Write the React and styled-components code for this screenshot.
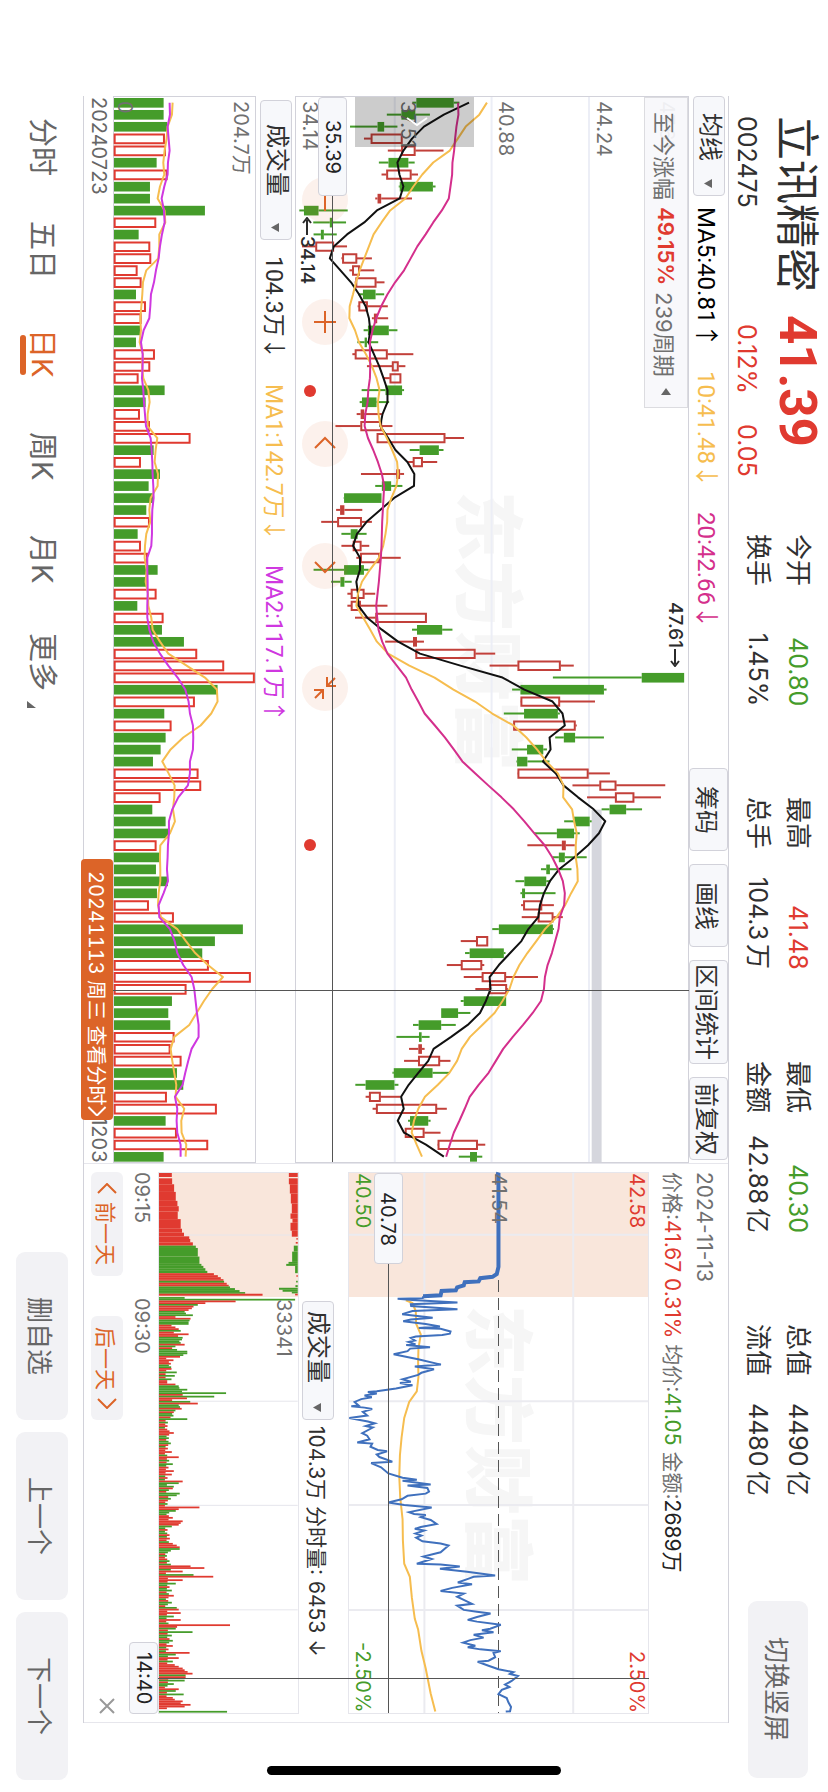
import React from "react";
import styled, { createGlobalStyle, css } from "styled-components";

const RED = "#e03a30";
const GREEN = "#459c2a";
const ORANGE = "#dc6428";
const AMBER = "#f6bd4f";
const MAGENTA = "#d42f8c";
const PURPLE = "#cf38e0";
const BLUE = "#3f70bd";
const INK = "#303030";
const GREY = "#666";
const LINE = "#d2d2da";
const SOFT = "#e6e6ec";
const CHIP = "#f7f8fb";

const TEXT_FONT = 'Inter, "Noto Sans CJK SC", sans-serif';
const LEGEND_FONT = 'Roboto, "Noto Sans CJK SC", sans-serif';

/* ---------- data ---------- */

// [direction, low, body start, body end, high]
const candles = [
  ["g", 395, 407, 520, 537], ["g", 318, 362, 404, 448], ["g", 207, 290, 310, 350],
  ["r", 249, 270, 365, 365], ["r", 321, 362, 404, 489], ["g", 294, 323, 383, 402],
  ["r", 302, 317, 392, 412], ["g", 354, 357, 457, 465], ["r", 283, 290, 301, 394],
  ["g", 54, 68, 112, 200], ["g", 96, 146, 154, 195], ["g", 97, 119, 128, 167],
  ["r", 62, 103, 158, 198], ["r", 181, 184, 228, 273], ["r", 205, 214, 236, 280],
  ["r", 221, 224, 286, 311], ["g", 231, 246, 284, 310], ["r", 230, 233, 260, 321],
  ["r", 273, 279, 289, 322], ["g", 248, 261, 324, 350], ["g", 229, 251, 258, 292],
  ["r", 214, 222, 320, 398], ["r", 258, 334, 353, 374], ["r", 308, 327, 361, 361],
  ["g", 242, 314, 364, 370], ["g", 236, 243, 287, 325], ["r", 227, 239, 250, 303],
  ["r", 163, 239, 303, 335], ["r", 288, 288, 494, 551], ["g", 387, 417, 475, 489],
  ["r", 382, 397, 426, 470], ["r", 240, 346, 358, 370], ["g", 283, 303, 331, 365],
  ["g", 188, 189, 302, 302], ["r", 165, 177, 190, 244], ["r", 120, 169, 242, 273],
  ["g", 181, 209, 230, 257], ["r", 181, 216, 241, 265], ["r", 226, 238, 297, 360],
  ["g", 97, 189, 249, 263], ["g", 150, 178, 190, 212], ["r", 199, 210, 250, 283],
  ["r", 199, 210, 239, 320], ["r", 222, 284, 438, 438], ["g", 394, 409, 485, 516],
  ["r", 313, 397, 409, 430], ["r", 403, 405, 585, 645], ["r", 628, 713, 842, 882],
  ["g", 819, 1087, 1215, 1215], ["g", 696, 721, 973, 981], ["r", 721, 722, 840, 946],
  ["g", 671, 732, 834, 840], ["r", 698, 700, 887, 891], ["g", 826, 852, 886, 973],
  ["g", 695, 741, 790, 801], ["g", 709, 711, 742, 809], ["r", 712, 713, 926, 991],
  ["r", 878, 960, 1010, 1158], ["r", 922, 1007, 1064, 1145], ["g", 966, 990, 1040, 1088],
  ["g", 853, 883, 930, 936], ["g", 762, 831, 883, 900], ["r", 742, 846, 858, 885],
  ["g", 818, 837, 855, 921], ["g", 783, 799, 810, 875], ["g", 706, 733, 799, 812],
  ["g", 721, 726, 735, 827], ["r", 723, 730, 786, 822], ["r", 725, 774, 820, 849],
  ["g", 636, 656, 819, 822], ["r", 541, 588, 623, 623], ["g", 554, 568, 671, 676],
  ["r", 499, 542, 605, 612], ["r", 550, 605, 677, 774], ["r", 585, 627, 680, 683],
  ["g", 541, 550, 678, 678], ["g", 482, 482, 533, 570], ["g", 397, 414, 482, 526],
  ["g", 347, 415, 423, 447], ["r", 385, 413, 424, 432], ["r", 370, 413, 478, 510],
  ["g", 335, 339, 456, 508], ["g", 223, 254, 341, 353], ["r", 254, 265, 299, 359],
  ["r", 275, 286, 469, 499], ["g", 382, 388, 443, 450], ["r", 371, 373, 431, 480],
  ["r", 471, 472, 592, 615], ["g", 535, 569, 590, 606],
];

const ma5 = [566, 490, 430, 394, 368, 350, 356, 368, 357, 288, 250, 198, 158, 146, 178, 210, 234, 254, 264, 268, 263, 279, 295, 308, 320, 320, 305, 298, 322, 344, 380, 401, 400, 340, 298, 257, 228, 216, 237, 237, 226, 231, 232, 259, 303, 352, 418, 540, 667, 733, 818, 848, 855, 809, 812, 789, 828, 851, 895, 942, 977, 958, 925, 884, 838, 810, 792, 780, 775, 745, 724, 690, 656, 628, 631, 617, 599, 562, 512, 459, 443, 413, 384, 361, 369, 351, 370, 436, 490];
const ma10 = [620, 597, 556, 532, 508, 458, 425, 398, 374, 328, 302, 278, 264, 250, 236, 225, 216, 206, 205, 222, 234, 255, 273, 287, 296, 291, 293, 299, 318, 334, 349, 352, 347, 332, 320, 319, 314, 307, 294, 267, 243, 231, 226, 247, 268, 288, 322, 386, 462, 519, 584, 636, 700, 739, 771, 799, 834, 851, 850, 877, 883, 891, 888, 888, 893, 894, 874, 856, 830, 795, 769, 742, 718, 700, 688, 667, 643, 606, 569, 544, 530, 507, 472, 433, 413, 400, 393, 408, 424];
const ma20 = [533, 534, 528, 524, 521, 516, 515, 510, 505, 484, 458, 435, 410, 390, 370, 343, 320, 301, 286, 275, 267, 267, 268, 267, 262, 260, 253, 251, 261, 277, 291, 303, 310, 308, 306, 304, 303, 302, 300, 297, 294, 290, 286, 289, 293, 304, 320, 348, 376, 393, 413, 432, 463, 493, 520, 546, 585, 624, 664, 701, 733, 763, 794, 817, 835, 849, 855, 853, 840, 836, 826, 816, 803, 795, 792, 783, 758, 729, 698, 669, 647, 625, 595, 568, 553, 537, 520, 508, 497];

// volume per day: a negative value is a falling day
const volumes = [-251, -251, -262, 254, 257, -230, 262, -210, -210, -375, 228, -176, 210, 213, 172, 184, -168, 197, 184, -180, -168, 224, 210, 175, -254, -197, 179, 209, 331, -221, 182, -240, -206, -219, -199, 209, -173, 182, 203, -233, -200, 229, -172, 250, -246, -312, 351, 432, 524, -413, 344, -253, 274, -257, -242, -219, 355, 363, 241, -217, -257, -265, 229, -241, -228, -264, -231, 206, 281, -489, -405, -367, 386, 512, 319, -276, -265, -271, 283, 271, 304, -291, -310, 260, 410, -257, 290, 384, -251];
const volMa1 = [278, 276, 263, 260, 254, 250, 253, 240, 233, 254, 256, 238, 238, 235, 199, 189, 187, 184, 181, 183, 179, 189, 186, 190, 205, 209, 203, 203, 232, 227, 224, 234, 233, 212, 208, 211, 199, 195, 194, 200, 197, 204, 205, 214, 218, 240, 265, 320, 375, 411, 413, 394, 362, 310, 272, 247, 266, 284, 283, 279, 285, 270, 241, 240, 241, 241, 236, 234, 243, 292, 318, 346, 384, 429, 397, 372, 350, 328, 283, 272, 277, 283, 289, 287, 313, 304, 305, 319, 317];
const volMa2 = [269, 270, 263, 266, 269, 264, 263, 253, 245, 252, 254, 246, 240, 236, 228, 222, 213, 211, 208, 191, 183, 188, 188, 186, 190, 192, 195, 198, 212, 215, 217, 218, 220, 221, 217, 216, 216, 214, 202, 202, 203, 203, 202, 202, 208, 220, 240, 265, 293, 316, 326, 330, 339, 340, 339, 330, 330, 324, 295, 277, 267, 267, 264, 263, 261, 264, 251, 236, 238, 270, 284, 292, 310, 335, 343, 347, 351, 356, 356, 335, 325, 316, 308, 285, 292, 290, 292, 302, 302];

const auctionLine = "497,38 505,40 505,300 500,320 487,328 450,332 445,341 403,343 400,352 380,358 376,366 333,368 330,380 277,383";
const priceLine = "277,383 276,388 200,390 245,393 381,400 240,405 241,410 381,419 245,424 214,433 306,443 240,448 217,453 285,461 328,468 264,472 330,474 360,482 358,488 335,492 255,496 240,500 252,507 233,511 254,518 226,520 298,526 238,530 230,537 188,546 262,560 331,575 252,580 310,588 272,598 262,604 215,616 240,623 207,627 245,633 195,642 137,650 110,652 137,656 100,662 122,667 90,672 70,680 82,690 60,692 100,696 123,700 95,708 108,718 54,725 110,735 131,740 104,748 125,752 93,768 108,775 115,785 78,794 123,797 118,806 140,815 168,819 137,828 145,835 184,848 120,852 150,864 172,881 215,893 258,899 215,902 300,912 230,915 290,922 295,932 285,938 230,944 212,954 172,963 220,970 303,977 235,990 250,995 285,998 270,1004 300,1012 318,1023 270,1032 252,1037 280,1042 254,1050 272,1056 256,1062 275,1072 330,1078 354,1084 330,1103 278,1115 303,1122 258,1135 330,1137 388,1143 328,1149 410,1158 495,1168 430,1172 415,1177 382,1188 425,1193 365,1203 330,1212 400,1219 380,1228 400,1237 425,1248 380,1253 400,1265 440,1270 481,1275 440,1285 412,1293 440,1298 512,1307 480,1318 455,1322 490,1328 430,1335 460,1343 420,1350 398,1357 435,1366 412,1370 450,1376 512,1381 490,1386 495,1398 475,1408 442,1411 475,1422 505,1432 550,1440 540,1445 564,1451 545,1465 525,1475 538,1482 515,1490 505,1502 530,1513 535,1525 543,1538 540,1550 527,1551";
const averageLine = "225,394 245,402 255,425 256,460 270,490 263,530 262,570 263,610 258,650 235,680 220,725 212,780 207,830 205,890 208,950 215,1010 216,1070 220,1135 237,1172 243,1230 252,1290 262,1320 272,1380 285,1430 300,1500 314,1551";

// call auction: [from, to, size, direction]
const auctionMatched = [
  [38, 50, 39, "r"], [54, 72, 40, "r"], [72, 95, 46, "r"], [95, 122, 51, "r"], [122, 138, 56, "r"],
  [138, 154, 60, "r"], [154, 177, 57, "r"], [177, 206, 66, "r"], [206, 218, 70, "r"], [218, 229, 76, "r"],
  [229, 237, 92, "r"], [237, 247, 95, "r"], [247, 257, 103, "r"], [257, 264, 112, "g"], [264, 290, 118, "g"],
  [290, 312, 123, "g"], [312, 318, 129, "g"], [318, 325, 135, "g"], [325, 333, 141, "g"], [333, 340, 147, "g"],
  [340, 346, 167, "r"], [346, 352, 179, "r"], [352, 358, 188, "r"], [358, 363, 196, "r"], [363, 369, 198, "g"],
  [369, 375, 206, "r"], [375, 380, 212, "r"], [380, 385, 216, "g"], [385, 391, 231, "g"], [391, 397, 245, "g"],
  [397, 402, 262, "g"], [402, 408, 315, "r"],
];
const auctionUnmatched = [
  [38, 50, 27, "r"], [54, 72, 27, "r"], [72, 100, 24, "r"], [100, 130, 21, "r"], [130, 160, 18, "r"],
  [160, 176, 22, "r"], [176, 188, 16, "r"], [188, 212, 22, "r"], [212, 230, 18, "r"], [234, 239, 4, "r"],
  [246, 251, 6, "r"], [257, 275, 12, "g"], [275, 306, 17, "g"], [306, 312, 28, "g"], [312, 318, 35, "g"],
  [318, 340, 8, "g"], [346, 351, 4, "r"], [363, 368, 5, "g"], [376, 382, 7, "g"], [384, 390, 57, "g"],
  [390, 396, 46, "g"], [396, 401, 18, "g"], [402, 407, 8, "r"],
];

const openingVolumes = [-78, -414, 233, 141, -118, 105, 100, 90, -78, -82, -103, 50, 96, -93, -90, -90, 38, 50, 60, -66, 45, 90, 58, -72, -70, -62, -66, 78, -50, 40, -55, -86, -86, -74, 64, 22, 44, 30, 36, -30, -37, 38, 22, -54, 20, -48, 20, -38, 25, 25, 50, -60, -62, -86, -70, -204, 72, -168, 85, 40, -95, 118, -60, -64, 69, -50, 45, -40, -44, 35, -86];
const busyMinutes = { 78: 45, 84: -36, 89: 39, 92: 60, 96: -42, 100: 45, 102: 39, 106: 72, 107: -60, 109: -45, 110: 42, 113: -63, 114: -54, 116: -36, 121: 123, 122: 60, 123: -51, 127: 42, 129: 72, 130: 66, 131: 60, 132: -39, 139: 33, 142: 42, 143: 54, 144: 63, 145: -63, 146: -36, 149: -24, 154: -36, 155: 96, 156: 138, 157: -36, 158: 72, 160: -105, 161: 165, 163: 72, 165: -51, 169: -39, 172: 45, 176: -39, 179: -54, 180: 60, 182: 66, 184: -45, 186: 66, 189: 216, 190: 55, 191: -51, 193: -102, 195: -39, 198: -42, 201: 42, 205: 93, 206: -51, 208: 60, 210: -42, 212: 48, 213: 60, 214: 72, 215: 78, 216: 87, 217: 102, 218: -81, 219: 81, 221: -78, 223: -45, 226: 60, 227: -51, 229: -75, 231: 42, 232: 48, 233: 72, 234: 66, 235: 96, 236: 78, 237: 24, 238: 0, 239: -207 };
const minuteVolumes = Array.from({ length: 240 }, (_, m) => {
  if (m < openingVolumes.length) return openingVolumes[m];
  if (m in busyMinutes) return busyMinutes[m];
  const size = 18 + ((m * 37) % 15);
  return (m * 7) % 11 < 6 ? size : -size;
});

const quotes = [
  { label: "今开", value: "40.80", tone: GREEN },
  { label: "最高", value: "41.48", tone: RED },
  { label: "最低", value: "40.30", tone: GREEN },
  { label: "总值", value: "4490", unit: "亿" },
  { label: "换手", value: "1.45%" },
  { label: "总手", value: "104.3", unit: "万" },
  { label: "金额", value: "42.88", unit: "亿" },
  { label: "流值", value: "4480", unit: "亿" },
];

/* ---------- shared pieces ---------- */

const GlobalStyle = createGlobalStyle`
  * { box-sizing: border-box; }
  body { margin: 0; background: #fff; }
  button, select {
    font: inherit;
    color: inherit;
    margin: 0;
    padding: 0;
    border: 0;
    background: none;
    writing-mode: inherit;
    text-orientation: inherit;
    white-space: nowrap;
  }
`;

const row = css`
  display: flex;
  flex-direction: row;
  align-items: center;
`;

const Page = styled.main`
  position: relative;
  display: flex;
  flex-direction: column;
  inline-size: 100vh;
  min-block-size: 100vw;
  writing-mode: vertical-rl;
  text-orientation: sideways;
  font-family: ${TEXT_FONT};
  font-size: 20px;
  color: ${INK};
  white-space: nowrap;
  overflow: hidden;
`;

const Header = styled.header`
  display: flex;
  flex: none;
  align-items: flex-start;
  block-size: 99px;
  padding-inline: 116px 14px;
`;

const Identity = styled.div`
  flex: none;
  inline-size: 418px;
  padding-block-start: 8px;
`;

const TitleLine = styled.div`
  ${row}
  gap: 23px;
  margin-block-end: 11px;
  line-height: 46px;
`;

const Name = styled.h1`
  margin: 0;
  font-size: 44px;
  font-weight: 400;
`;

const Price = styled.strong`
  font-family: ${LEGEND_FONT};
  font-size: 51px;
  font-weight: 700;
  color: ${RED};
`;

const CodeLine = styled.div`
  display: grid;
  grid-template-columns: 208px 100px auto;
  font-size: 25px;
  line-height: 32px;
`;

const Figure = styled.span`
  color: ${(p) => p.$tone || "inherit"};
  font-weight: ${(p) => (p.$strong ? 600 : 400)};
`;

const Unit = styled.span`
  margin-inline-start: 4px;
`;

const Quotes = styled.dl`
  display: grid;
  flex: 1;
  grid-template-columns: repeat(4, 1fr);
  column-gap: 91px;
  margin: 0;
  padding-block-start: 10px;
  font-size: 25px;
  line-height: 40px;
`;

const Quote = styled.div`
  display: flex;
  justify-content: space-between;
  dt { font-size: 26px; }
  dd { margin: 0; color: ${(p) => p.$tone || INK}; }
`;

const SoftButton = styled.button`
  flex: none;
  inline-size: ${(p) => p.$length}px;
  block-size: ${(p) => p.$thick}px;
  border-radius: 9px;
  && { background: #f2f2f5; color: ${GREY}; font-size: 26px; }
`;

const RotateButton = styled(SoftButton)`
  && { margin-block-start: 20px; margin-inline-start: 105px; }
`;

const Body = styled.div`
  display: grid;
  flex: 1;
  grid-template-columns: minmax(0, 1067fr) minmax(0, 560fr);
  min-block-size: 0;
  margin-inline: 96px 69px;
  border-block: 1px solid ${LINE};
`;

const Panel = styled.section`
  position: relative;
  display: flex;
  flex-direction: column;
`;

const SidePanel = styled(Panel)`
  padding-inline: 8px;
  border-inline: 1px solid ${SOFT};
`;

const Plot = styled.div`
  position: relative;
  flex: ${(p) => p.$share} 1 0;
  min-block-size: 0;
  border: 1px solid ${(p) => p.$edge || LINE};
`;

const Drawing = styled.svg`
  position: absolute;
  inset: 0;
  width: 100%;
  height: 100%;
  overflow: visible;
  polyline, line, rect { vector-effect: non-scaling-stroke; }
`;

const Watermark = styled.span`
  position: absolute;
  inset-block-start: ${(p) => p.$down};
  inset-inline-start: ${(p) => p.$along};
  font-size: 70px;
  font-weight: 900;
  line-height: 80px;
  color: #f6f6f6;
`;

const AxisLabel = styled.span`
  position: absolute;
  inset-block-end: ${(p) => p.$up};
  ${(p) => (p.$end ? "inset-inline-end: 0;" : `inset-inline-start: ${p.$along || "4px"};`)}
  line-height: 27px;
  color: ${(p) => p.$tone || "#707070"};
`;

const Marker = styled.span`
  position: absolute;
  ${row}
  gap: 1px;
  inset-block-end: ${(p) => p.$up};
  inset-inline-start: ${(p) => p.$along};
  line-height: 22px;
  font-size: 19px;
  font-weight: 500;
  color: #2b2b2b;
`;

const HLine = styled.i`
  position: absolute;
  inset-inline: 0;
  inset-block-end: ${(p) => p.$up};
  block-size: 1px;
  background: #555;
`;

const VLine = styled.i`
  position: absolute;
  inset-inline-start: ${(p) => p.$along};
  inset-block: ${(p) => p.$from} ${(p) => p.$to};
  inline-size: 1px;
  background: #555;
`;

const ValueTag = styled.output`
  position: absolute;
  ${row}
  justify-content: center;
  inset-block-end: ${(p) => p.$up};
  ${(p) => (p.$end ? "inset-inline-end: 0;" : "inset-inline-start: 0;")}
  inline-size: ${(p) => p.$length}px;
  block-size: 29px;
  border: 1px solid ${LINE};
  border-radius: 4px;
  background: ${CHIP};
  color: #222;
`;

const Picker = styled.label`
  position: relative;
  ${row}
  flex: none;
  inline-size: ${(p) => p.$length}px;
  block-size: 32px;
  border: 1px solid ${LINE};
  border-radius: 4px;
  background: ${CHIP};
  font-size: 24px;
  select {
    appearance: none;
    inline-size: 100%;
    block-size: 100%;
    padding-inline-start: ${(p) => p.$pad}px;
  }
  svg {
    position: absolute;
    inset-inline-end: 7px;
    inset-block-start: 12px;
    pointer-events: none;
  }
`;

const Legend = styled.div`
  ${row}
  flex: none;
  block-size: 39px;
  padding-inline-start: ${(p) => p.$pad || 0}px;
  font-family: ${LEGEND_FONT};
  font-size: ${(p) => p.$size}px;
`;

const Averages = styled.div`
  ${row}
  gap: 24px;
  margin-inline-start: ${(p) => p.$space}px;
`;

const Actions = styled.div`
  ${row}
  gap: 13px;
  margin-inline-start: auto;
  margin-inline-end: 3px;
`;

const ActionButton = styled.button`
  && {
    min-inline-size: 83px;
    padding-inline: 3px;
    block-size: 39px;
    border: 1px solid ${LINE};
    border-radius: 4px;
    background: ${CHIP};
    font-size: 24px;
  }
`;

const GainButton = styled.button`
  && {
    position: absolute;
    ${row}
    gap: 7px;
    inset-block-start: 0;
    inset-inline-start: 0;
    inline-size: 311px;
    block-size: 44px;
    padding-inline: 14px 12px;
    border: 1px solid #dcdce0;
    background: rgba(247, 248, 251, 0.93);
    color: #707070;
    font-size: 22px;
  }
  svg { margin-inline-start: auto; }
`;

const Fold = styled.button`
  && {
    position: absolute;
    inset-inline-start: 0;
    inset-block: 54.5% 15%;
    inline-size: 50px;
    background: rgba(0, 0, 0, 0.2);
  }
`;

const Tools = styled.div`
  position: absolute;
  display: flex;
  gap: 76px;
  inset-block-end: 6px;
  inset-inline-start: 80px;
`;

const ToolButton = styled.button`
  inline-size: 46px;
  block-size: 46px;
  border-radius: 50%;
  && { background: rgba(220, 100, 40, 0.09); }
  svg { display: block; }
`;

const Dot = styled.i`
  position: absolute;
  inset-block-end: 8px;
  inset-inline-start: ${(p) => p.$along};
  inline-size: 12px;
  block-size: 12px;
  border-radius: 50%;
  background: ${RED};
`;

const Dates = styled.div`
  position: relative;
  ${row}
  justify-content: space-between;
  flex: none;
  block-size: 29px;
  padding-inline-start: 1px;
  color: ${GREY};
`;

const DayButton = styled.button`
  && {
    position: absolute;
    ${row}
    justify-content: space-between;
    inset-block-start: 0;
    inset-inline-end: 43px;
    inline-size: 261px;
    block-size: 32px;
    padding-inline: 12px 4px;
    border-radius: 4px;
    background: ${ORANGE};
    color: #fff;
    font-variant-numeric: tabular-nums;
  }
`;

const Summary = styled.div`
  flex: none;
  block-size: 79px;
  padding-block-start: 8px;
  font-size: 21px;
  color: #707070;
`;

const SummaryLine = styled.p`
  margin: 0;
  line-height: 32px;
`;

const SideLegend = styled.div`
  ${row}
  gap: 6px;
  flex: none;
  block-size: 49px;
  padding-inline-start: 129px;
  padding-block-start: 11px;
  font-size: 21px;
`;

const Times = styled.div`
  position: relative;
  flex: none;
  block-size: 32px;
  color: ${GREY};
`;

const DayNav = styled.nav`
  ${row}
  align-items: flex-start;
  gap: 40px;
  flex: none;
  block-size: 42px;
`;

const DayLink = styled.button`
  && {
    ${row}
    gap: 8px;
    justify-content: center;
    inline-size: 104px;
    block-size: 32px;
    margin-block-start: 3px;
    border-radius: 6px;
    background: #f2f2f5;
    color: ${ORANGE};
    font-size: 21px;
  }
`;

const CloseButton = styled.button`
  && { margin-inline-start: auto; margin-block-start: 11px; }
  svg { display: block; }
`;

const Footer = styled.footer`
  ${row}
  flex: none;
  gap: 12px;
  block-size: 83px;
  padding-inline: 96px 12px;
`;

const Tabs = styled.nav`
  display: flex;
  flex: none;
  inline-size: 618px;
  margin-inline-end: auto;
`;

const Tab = styled.button`
  position: relative;
  flex: 1;
  && { color: ${(p) => (p.$on ? ORANGE : GREY)}; font-size: 29px; line-height: 44px; }
  ${(p) =>
    p.$on &&
    css`
      &::after {
        content: "";
        position: absolute;
        inset-block-end: 0;
        inset-inline-start: 33px;
        inline-size: 40px;
        block-size: 6px;
        border-radius: 3px;
        background: ${ORANGE};
      }
    `}
  svg { position: absolute; inset-block-end: 7px; inset-inline-end: 6px; }
`;

const HomeBar = styled.i`
  position: absolute;
  inset-inline-end: 17px;
  inset-block: 267px;
  inline-size: 9px;
  border-radius: 5px;
  background: #000;
`;

const Auction = styled.div`
  position: absolute;
  inset-block: 0;
  inset-inline-start: 0;
  inline-size: 23%;
  background: #f9e6db;
`;

function Dropdown({ name, value, length, pad }) {
  return (
    <Picker $length={length} $pad={pad}>
      <select aria-label={name} defaultValue={value}>
        <option>{value}</option>
      </select>
      <svg width="8" height="9" viewBox="0 0 8 9"><path d="M8 0V9L0 4.500Z" fill={GREY} /></svg>
    </Picker>
  );
}

function Stroke({ size, d, color = ORANGE, width = 2 }) {
  return (
    <svg width={size} height={size} viewBox={`0 0 ${size} ${size}`} fill="none" stroke={color} strokeWidth={width}>
      <path d={d} />
    </svg>
  );
}

const Chevron = ({ back, color = ORANGE }) => (
  <svg width="20" height="11" viewBox="0 0 20 11" fill="none" stroke={color} strokeWidth="2">
    <path d={back ? "M1 10L10 1L19 10" : "M1 1L10 10L19 1"} />
  </svg>
);

const dayAt = (i) => 17 + 36 * i;
const trace = (values) => values.map((v, i) => `${v},${dayAt(i)}`).join(" ");

function Trend({ values, color }) {
  return <polyline points={trace(values)} fill="none" stroke={color} strokeWidth="2" strokeLinejoin="round" />;
}

function Candles() {
  return (
    <Drawing viewBox="44 0 1182 3201" preserveAspectRatio="none">
      {[342, 634, 928].map((x) => (
        <line key={x} x1={x} x2={x} y1="0" y2="3201" stroke="#eceef6" strokeWidth="2" />
      ))}
      <rect x="936" y="2142" width="30" height="1059" fill="#d5d6dd" />
      {candles.map(([dir, low, from, to, high], i) => {
        const y = dayAt(i);
        const color = dir === "g" ? GREEN : "#c2403a";
        return (
          <g key={i} stroke={color}>
            <line x1={low} x2={from} y1={y} y2={y} strokeWidth="2" />
            <line x1={to} x2={high} y1={y} y2={y} strokeWidth="2" />
            {dir === "g" || to - from < 14 ? (
              <rect x={from} y={y - 14} width={to - from} height="29" fill={color} stroke="none" />
            ) : (
              <rect x={from + 2} y={y - 12} width={to - from - 4} height="25" fill="none" strokeWidth="2" />
            )}
          </g>
        );
      })}
      <Trend values={ma5} color="#111" />
      <Trend values={ma10} color={AMBER} />
      <Trend values={ma20} color={MAGENTA} />
    </Drawing>
  );
}

function VolumeBars() {
  return (
    <Drawing viewBox="102 0 424 3201" preserveAspectRatio="none">
      {volumes.map((v, i) => {
        const y = dayAt(i);
        return v < 0 ? (
          <rect key={i} x="102" y={y - 14} width={-v - 102} height="29" fill={GREEN} />
        ) : (
          <rect key={i} x="104" y={y - 12} width={v - 106} height="26" fill="none" stroke={RED} strokeWidth="2" />
        );
      })}
      <Trend values={volMa1} color={AMBER} />
      <Trend values={volMa2} color={PURPLE} />
    </Drawing>
  );
}

function IntradayPrice() {
  return (
    <Drawing viewBox="53 36 905 1519" preserveAspectRatio="none">
      {[281, 731].map((x) => (
        <line key={x} x1={x} x2={x} y1="36" y2="1555" stroke="#ebebf0" strokeWidth="2" />
      ))}
      {[210, 678, 970, 1265].map((y) => (
        <line key={y} x1="53" x2="958" y1={y} y2={y} stroke="#ebebf0" strokeWidth="2" />
      ))}
      <line x1="505" x2="505" y1="337" y2="1555" stroke="#555" strokeWidth="1" strokeDasharray="12 6" shapeRendering="crispEdges" />
      <polyline points={averageLine} fill="none" stroke={AMBER} strokeWidth="2" />
      <polyline points={auctionLine} fill="none" stroke={BLUE} strokeWidth="4" />
      <polyline points={priceLine} fill="none" stroke={BLUE} strokeWidth="2" />
    </Drawing>
  );
}

function IntradayVolume() {
  return (
    <Drawing viewBox="204 38 422 1628" preserveAspectRatio="none">
      {[225, 726, 1040, 1355].map((y) => (
        <line key={y} x1="204" x2="626" y1={y} y2={y} stroke="#e6e6ec" strokeWidth="1" />
      ))}
      {auctionMatched.map(([from, to, size, dir]) => (
        <rect key={from} x="204" y={from} width={size} height={to - from} fill={dir === "r" ? RED : GREEN} />
      ))}
      {auctionUnmatched.map(([from, to, size, dir]) => (
        <rect key={from} x={626 - size} y={from} width={size} height={to - from} fill={dir === "r" ? RED : GREEN} />
      ))}
      {minuteVolumes.map((v, m) => (
        <rect key={m} x="204" y={412 + m * 5.22} width={Math.abs(v)} height="5.3" fill={v > 0 ? RED : GREEN} />
      ))}
    </Drawing>
  );
}

export default function App() {
  return (
    <>
      <GlobalStyle />
      <Page>
        <Header>
          <Identity>
            <TitleLine>
              <Name>立讯精密</Name>
              <Price>41.39</Price>
            </TitleLine>
            <CodeLine>
              <Figure>002475</Figure>
              <Figure $tone={RED}>0.12%</Figure>
              <Figure $tone={RED}>0.05</Figure>
            </CodeLine>
          </Identity>
          <Quotes>
            {quotes.map((q) => (
              <Quote key={q.label} $tone={q.tone}>
                <dt>{q.label}</dt>
                <dd>
                  {q.value}
                  {q.unit && <Unit>{q.unit}</Unit>}
                </dd>
              </Quote>
            ))}
          </Quotes>
          <RotateButton $length={177} $thick={60}>切换竖屏</RotateButton>
        </Header>

        <Body>
          <Panel>
            <Legend $size={24}>
              <Dropdown name="主图指标" value="均线" length={100} pad={16} />
              <Averages $space={11}>
                <Figure $tone="#000">MA5:40.81↑</Figure>
                <Figure $tone={AMBER}>10:41.48↓</Figure>
                <Figure $tone={MAGENTA}>20:42.66↓</Figure>
              </Averages>
              <Actions>
                {["筹码", "画线", "区间统计", "前复权"].map((t) => (
                  <ActionButton key={t}>{t}</ActionButton>
                ))}
              </Actions>
            </Legend>
            <Plot $share={394}>
              <Watermark $down="41%" $along="37%">东方财富</Watermark>
              <Candles />
              <AxisLabel $up="91%">47.61</AxisLabel>
              <AxisLabel $up="75%">44.24</AxisLabel>
              <AxisLabel $up="50%">40.88</AxisLabel>
              <AxisLabel $up="25%">37.51</AxisLabel>
              <AxisLabel $up="0%">34.14</AxisLabel>
              <Marker $up="0%" $along="120px">
                <Stroke size={18} d="M9 18V3M5 6L9 1L13 6" color="#2b2b2b" />
                34.14
              </Marker>
              <Marker $up="94%" $along="47.4%">
                47.61
                <Stroke size={18} d="M9 0V15M5 12L9 17L13 12" color="#2b2b2b" />
              </Marker>
              <Dot $along="27%" />
              <Dot $along="69.7%" />
              <Tools>
                <ToolButton aria-label="缩小"><Stroke size={46} d="M23 12V34" /></ToolButton>
                <ToolButton aria-label="放大"><Stroke size={46} d="M23 12V34M12 23H34" /></ToolButton>
                <ToolButton aria-label="左移"><Stroke size={46} d="M13 27L23 17L33 27" /></ToolButton>
                <ToolButton aria-label="右移"><Stroke size={46} d="M13 19L23 29L33 19" /></ToolButton>
                <ToolButton aria-label="还原">
                  <Stroke size={46} d="M25 12V21H34M25 21L33 13M12 25H21V34M21 25L13 33" />
                </ToolButton>
              </Tools>
              <Fold aria-label="收起">
                <svg width="24" height="12" viewBox="0 0 24 12" fill="none" stroke="#fff" strokeWidth="2">
                  <path d="M2 2L12 9L22 2" />
                </svg>
              </Fold>
              <HLine $up="9.2%" />
              <ValueTag $up="22px" $length={99}>35.39</ValueTag>
              <GainButton>
                <span>至今涨幅</span>
                <Figure $strong $tone={RED}>49.15%</Figure>
                <span>239周期</span>
                <svg width="10" height="7" viewBox="0 0 10 7"><path d="M0 7H10L5 0Z" fill={GREY} /></svg>
              </GainButton>
            </Plot>
            <Legend $size={23} $pad={4}>
              <Dropdown name="副图指标" value="成交量" length={140} pad={23} />
              <Averages $space={16}>
                <Figure>104.3万↓</Figure>
                <Figure $tone={AMBER}>MA1:142.7万↓</Figure>
                <Figure $tone={PURPLE}>MA2:117.1万↑</Figure>
              </Averages>
            </Legend>
            <Plot $share={142}>
              <VolumeBars />
              <AxisLabel $up="80%">204.7万</AxisLabel>
              <AxisLabel $up="-3px">0</AxisLabel>
            </Plot>
            <VLine $along="83.8%" $from="39px" $to="29px" />
            <Dates>
              <span>20240723</span>
              <span>20241203</span>
              <DayButton>
                20241113 周三 查看分时
                <Chevron color="#fff" />
              </DayButton>
            </Dates>
          </Panel>

          <SidePanel>
            <Summary>
              <SummaryLine>2024-11-13</SummaryLine>
              <SummaryLine>
                价格:<Figure $tone={RED}>41.67 0.31%</Figure> 均价:<Figure $tone={GREEN}>41.05</Figure> 金额:
                <Figure $tone="#222">2689万</Figure>
              </SummaryLine>
            </Summary>
            <Plot $share={302} $edge={SOFT}>
              <Auction />
              <Watermark $down="37%" $along="24.5%">东方财富</Watermark>
              <IntradayPrice />
              <AxisLabel $up="91.5%" $along="0px" $tone={RED}>42.58</AxisLabel>
              <AxisLabel $up="45.5%" $along="0px">41.54</AxisLabel>
              <AxisLabel $up="0%" $along="0px" $tone={GREEN}>40.50</AxisLabel>
              <AxisLabel $up="91.5%" $end $tone={RED}>2.50%</AxisLabel>
              <AxisLabel $up="0%" $end $tone={GREEN}>-2.50%</AxisLabel>
              <HLine $up="13%" />
              <ValueTag $up="25px" $length={91}>40.78</ValueTag>
            </Plot>
            <SideLegend>
              <Dropdown name="分时指标" value="成交量" length={119} pad={9} />
              <span>104.3万 分时量: 6453 ↓</span>
            </SideLegend>
            <Plot $share={140} $edge={SOFT}>
              <Auction />
              <IntradayVolume />
              <AxisLabel $up="80%" $along="23.3%">33341</AxisLabel>
            </Plot>
            <VLine $along="92.1%" $from="79px" $to="74px" />
            <Times>
              <AxisLabel $up="2px" $along="0px">09:15</AxisLabel>
              <AxisLabel $up="2px" $along="23.3%">09:30</AxisLabel>
              <ValueTag $up="3px" $length={72} $end>14:40</ValueTag>
            </Times>
            <DayNav>
              <DayLink><Chevron back />前一天</DayLink>
              <DayLink>后一天<Chevron /></DayLink>
              <CloseButton aria-label="关闭">
                <Stroke size={16} d="M1 1L15 15M15 1L1 15" color="#999" />
              </CloseButton>
            </DayNav>
          </SidePanel>
        </Body>

        <Footer>
          <Tabs>
            <Tab>分时</Tab>
            <Tab>五日</Tab>
            <Tab $on>日K</Tab>
            <Tab>周K</Tab>
            <Tab>月K</Tab>
            <Tab>
              更多
              <svg width="9" height="7" viewBox="0 0 9 7"><path d="M0 0V7H9Z" fill={GREY} /></svg>
            </Tab>
          </Tabs>
          <SoftButton $length={168} $thick={52}>删自选</SoftButton>
          <SoftButton $length={168} $thick={52}>上一个</SoftButton>
          <SoftButton $length={168} $thick={52}>下一个</SoftButton>
        </Footer>
        <HomeBar />
      </Page>
    </>
  );
}
